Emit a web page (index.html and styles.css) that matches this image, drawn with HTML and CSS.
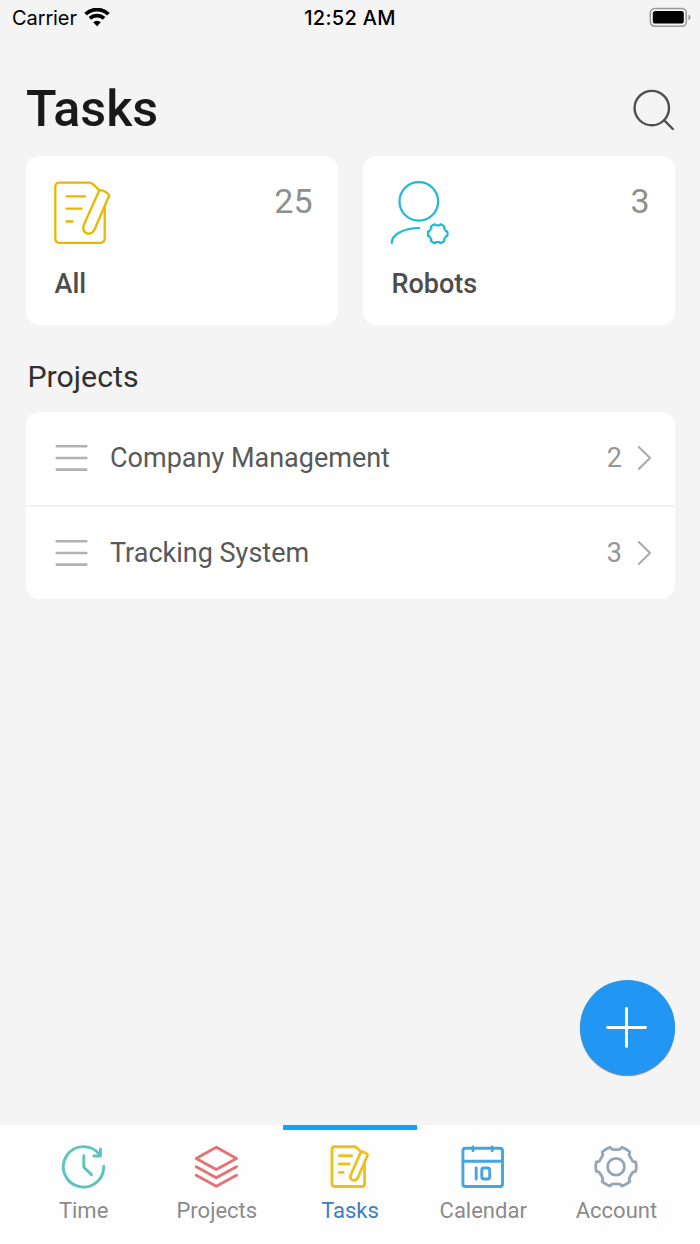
FILE: index.html
```html
<!DOCTYPE html>
<html lang="en">
<head>
    <meta charset="UTF-8">
    <meta name="viewport" content="width=device-width, initial-scale=1.0">
    <title>Tasks</title>
    <link rel="stylesheet" href="styles.css">
</head>
<body>
    <!-- Shared icon shapes -->
    <svg class="sprite" width="0" height="0">
        <symbol id="note" viewBox="0 0 60 66">
            <path d="M52.7 27V58.5Q52.7 62.8 48.4 62.8H7.6Q3.3 62.8 3.3 58.5V7Q3.3 2.7 7.6 2.7H37Q39.5 2.7 41 4.2L47.3 10.2"/>
            <path d="M47.3 10.2L31.8 45C30 49.5 32.5 53.6 36.5 53.6C39.5 53.6 41.3 52 42.5 49.5L57.2 15.5C56 12.5 51.5 10 47.3 10.2Z"/>
            <path d="M14.5 16.3H33M14.5 28.7H29.5M14.5 41.5H20.5"/>
        </symbol>
        <symbol id="gear" viewBox="-23 -23 46 46">
            <path d="M19.8 -4.6Q20.8 0 19.8 4.6L16.9 5.4Q14.6 8.4 13.1 12L13.8 14.8Q10.4 18 5.9 19.4L3.9 17.4Q0 16.9 -3.9 17.4L-5.9 19.4Q-10.4 18 -13.8 14.8L-13.1 12Q-14.6 8.4 -16.9 5.4L-19.8 4.6Q-20.8 0 -19.8 -4.6L-16.9 -5.4Q-14.6 -8.4 -13.1 -12L-13.8 -14.8Q-10.4 -18 -5.9 -19.4L-3.9 -17.4Q0 -16.9 3.9 -17.4L5.9 -19.4Q10.4 -18 13.8 -14.8L13.1 -12Q14.6 -8.4 16.9 -5.4Z"/>
        </symbol>
    </svg>

    <div class="status-bar">
        <div class="carrier">
            <span>Carrier</span>
            <svg class="wifi" width="26" height="20" viewBox="0 0 26 20">
                <path d="M1.6 6.1A16.6 16.6 0 0 1 24.4 6.1M5.9 10.4A10.3 10.3 0 0 1 20.1 10.4"/>
                <path class="dot" d="M9.2 14.2A5.5 5.5 0 0 1 16.8 14.2L13 18.2Z"/>
            </svg>
        </div>
        <div class="clock">12:52 AM</div>
        <svg class="battery" width="42" height="20" viewBox="0 0 42 20">
            <rect class="shell" x="0.3" y="0.4" width="36" height="17.8" rx="4.5"/>
            <rect x="2.8" y="3" width="31" height="12.6" rx="2.6"/>
            <path class="cap" d="M38.5 6.4Q40.6 7.2 40.6 9.3T38.5 12.2Z"/>
        </svg>
    </div>

    <header>
        <h1>Tasks</h1>
        <svg class="icon search" width="44" height="44" viewBox="0 0 44 44">
            <circle cx="20.8" cy="19.1" r="17.2"/>
            <path d="M33 31.2L41.8 40"/>
        </svg>
    </header>

    <main>
        <section class="cards">
            <div class="card">
                <div class="card-top">
                    <svg class="icon note-icon" width="60" height="66"><use href="#note"/></svg>
                    <span class="count">25</span>
                </div>
                <div class="card-label">All</div>
            </div>
            <div class="card">
                <div class="card-top">
                    <svg class="icon robot-icon" width="62" height="66" viewBox="0 0 62 66">
                        <circle cx="30.8" cy="21.4" r="19.3"/>
                        <path d="M31.2 48C15 48.3 3.7 54.5 3.7 63"/>
                        <use href="#gear" class="small-gear" x="38.5" y="42.5" width="22.4" height="22.4"/>
                    </svg>
                    <span class="count">3</span>
                </div>
                <div class="card-label">Robots</div>
            </div>
        </section>

        <h2>Projects</h2>

        <section class="project-list">
            <div class="project">
                <svg class="icon lines" width="34" height="28" viewBox="0 0 34 28"><path d="M1.7 2.2H31.3M1.7 14H31.3M1.7 25.6H31.3"/></svg>
                <span class="name">Company Management</span>
                <span class="number">2</span>
                <svg class="icon arrow" width="14" height="26" viewBox="0 0 14 26"><path d="M0.8 2L12 13L0.8 24"/></svg>
            </div>
            <div class="project">
                <svg class="icon lines" width="34" height="28" viewBox="0 0 34 28"><path d="M1.7 2.2H31.3M1.7 14H31.3M1.7 25.6H31.3"/></svg>
                <span class="name">Tracking System</span>
                <span class="number">3</span>
                <svg class="icon arrow" width="14" height="26" viewBox="0 0 14 26"><path d="M0.8 2L12 13L0.8 24"/></svg>
            </div>
        </section>
    </main>

    <button class="add-btn" aria-label="Add task">
        <svg class="icon" width="44" height="44" viewBox="0 0 44 44"><path d="M21.5 2.5V40.5M2.5 21.5H40.5"/></svg>
    </button>

    <nav class="tab-bar">
        <a class="tab time">
            <svg class="icon" width="46" height="46" viewBox="0 0 46 46">
                <path d="M43.7 22.3A20.2 20.2 0 1 1 39.6 10.6"/>
                <path d="M40.5 5.3V12H33.8M23.8 11.7V23.2L31.5 30.6"/>
            </svg>
            <span>Time</span>
        </a>
        <a class="tab projects">
            <svg class="icon" width="46" height="46" viewBox="0 0 46 46">
                <path d="M23.3 3.2L43.5 14.4L23.3 25.4L3.2 14.4Z"/>
                <path d="M3.2 22.7L23.3 33.8L43.5 22.7M3.2 31.2L23.3 42.3L43.5 31.2"/>
            </svg>
            <span>Projects</span>
        </a>
        <a class="tab tasks active">
            <svg class="icon" width="40" height="46" viewBox="0 0 40 46"><use href="#note" x="-0.4" y="1" width="40" height="43.6"/></svg>
            <span>Tasks</span>
        </a>
        <a class="tab calendar">
            <svg class="icon" width="46" height="46" viewBox="0 0 46 46">
                <rect x="2.9" y="4.3" width="39.6" height="38.2" rx="2.5"/>
                <path d="M2.9 17.3H42.5M13 3V6.8M32.2 3V6.8M16.2 24V35"/>
                <rect x="21.8" y="24" width="7.9" height="11" rx="2"/>
            </svg>
            <span>Calendar</span>
        </a>
        <a class="tab account">
            <svg class="icon" width="46" height="46" viewBox="0 0 46 46">
                <use href="#gear" y="-0.3" width="46" height="46"/>
                <circle cx="23" cy="22.7" r="8.4"/>
            </svg>
            <span>Account</span>
        </a>
    </nav>
</body>
</html>
```
FILE: styles.css
```css
* {
    box-sizing: border-box;
}

body {
    font-family: Roboto, sans-serif;
    background-color: #f4f4f4;
    margin: 0;
    height: 1244px;
    display: flex;
    flex-direction: column;
    overflow: hidden;
}

.sprite {
    position: absolute;
}

.icon {
    display: block;
    flex: none;
    fill: none;
    stroke: currentColor;
    stroke-width: 2.9;
    stroke-linecap: round;
    stroke-linejoin: round;
}

/* Status bar */
.status-bar {
    display: grid;
    grid-template-columns: 1fr auto 1fr;
    align-items: center;
    height: 36px;
    padding: 0 8px 0 12px;
    font-family: Inter, sans-serif;
    font-size: 20px;
    color: #000;
}

.carrier {
    display: flex;
    align-items: center;
    gap: 7px;
    letter-spacing: -0.1px;
}

.wifi {
    fill: none;
    stroke: #000;
    stroke-width: 3.8;
}

.wifi .dot {
    fill: #000;
    stroke: none;
}

.clock {
    margin-right: 4px;
    font-weight: 550;
    letter-spacing: 0.3px;
}

.battery {
    justify-self: end;
    overflow: visible;
}

.battery .shell {
    fill: none;
    stroke: #999;
    stroke-width: 1.5;
}

.battery .cap {
    fill: #999;
}

/* Title */
header {
    display: flex;
    justify-content: space-between;
    height: 119.5px;
    padding: 42px 25px 0 26px;
}

h1 {
    margin: 1px 0 0;
    font-size: 50.2px;
    line-height: 60px;
    font-weight: 500;
    color: #191919;
}

.search {
    margin-top: 11px;
    color: #505050;
    stroke-width: 2.4;
}

main {
    flex: 1;
    padding: 0 25.5px;
}

/* Cards */
.cards {
    display: grid;
    grid-template-columns: 1fr 1fr;
    gap: 25px;
}

.card {
    height: 169px;
    padding: 24.5px 25px 0 26.5px;
    background: white;
    border-radius: 14px;
}

.card-top {
    display: flex;
    justify-content: space-between;
}

.count {
    font-size: 34px;
    line-height: 42px;
    color: #8f8f8f;
}

.card-label {
    margin: 21px 0 0 2.5px;
    font-size: 27px;
    line-height: 34px;
    font-weight: 500;
    color: #4d4d4d;
}

.note-icon {
    color: #eab600;
    stroke-width: 2.3;
}

.robot-icon {
    margin-left: -1.5px;
    color: #1cb9d8;
    stroke-width: 2.2;
}

.small-gear {
    stroke-width: 4.6;
}

/* Project list */
h2 {
    margin: 34px 0 17px 2px;
    font-size: 30.3px;
    line-height: 36px;
    font-weight: 400;
    color: #303030;
}

.project-list {
    background: white;
    border-radius: 14px;
}

.project {
    display: flex;
    align-items: center;
    height: 93px;
    padding: 0 22.5px 0 29px;
    font-size: 27px;
    color: #595959;
}

.project + .project {
    height: 94.5px;
    border-top: 2px solid #f2f2f2;
}

.lines {
    margin-right: 21.5px;
    color: #b1b1b1;
    stroke-width: 2.6;
}

.name {
    flex: 1;
}

.number {
    margin-right: 16px;
    color: #969696;
}

.arrow {
    color: #aaa;
    stroke-width: 2;
}

/* Add button */
.add-btn {
    align-self: flex-end;
    display: flex;
    align-items: center;
    justify-content: center;
    width: 95px;
    height: 95px;
    margin: 0 25.5px 50px 0;
    padding: 0;
    border: none;
    border-radius: 50%;
    background-color: #2196f3;
    color: white;
    box-shadow: 0 1px 1px rgba(0, 0, 0, 0.45);
}

/* Bottom tabs */
.tab-bar {
    display: flex;
    height: 119px;
    padding: 0 17px;
    background: #fefefe;
}

.tab {
    flex: 1;
    display: flex;
    flex-direction: column;
    align-items: center;
    padding-top: 14px;
    border-top: 5px solid transparent;
    font-size: 22px;
    line-height: 26px;
    color: #8b8b8b;
}

.tab .icon {
    margin-right: 1px;
}

.tab span {
    margin-top: 8px;
}

.tab.active {
    border-top-color: #0ba5fa;
    color: #3c7dc4;
}

.time .icon {
    color: #5cc4bd;
}

.projects .icon {
    color: #e57373;
}

.tasks .icon {
    color: #eebf24;
    stroke-width: 4.3;
}

.calendar .icon {
    color: #47a4dc;
}

.account .icon {
    color: #94a6b5;
    stroke-width: 2.8;
}
```
